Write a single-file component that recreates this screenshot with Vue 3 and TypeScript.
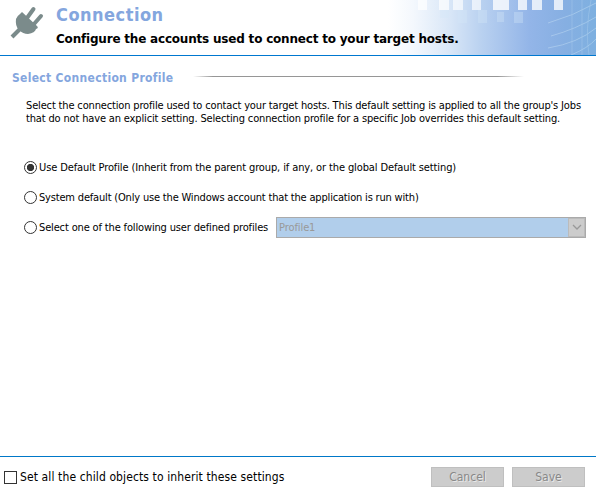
<script setup lang="ts">
import { ref } from 'vue'

type Profile = 'default' | 'system' | 'custom'
const selected = ref<Profile>('default')
const inherit = ref(false)
const blocks = [
  { x: 30, w: 9, o: 0.7 }, { x: 51, w: 10, o: 0.7 }, { x: 65, w: 10, o: 0.65 },
  { x: 84, w: 9, o: 0.65 }, { x: 105, w: 16, o: 0.78 }, { x: 130, w: 9, o: 0.76 },
  { x: 144, w: 10, o: 0.76 }, { x: 166, w: 9, o: 0.76 },
]
</script>

<template>
  <main class="panel">
    <header class="header">
      <svg class="art" viewBox="0 0 208 55" width="208" height="55">
        <defs>
          <linearGradient id="sky" x1="0" x2="1" y1="0" y2="0">
            <stop offset="0" stop-color="#fff" /><stop offset=".12" stop-color="#f4f8fd" />
            <stop offset=".3" stop-color="#d8e6f7" /><stop offset=".45" stop-color="#b9d1f0" />
            <stop offset=".68" stop-color="#93b5e8" /><stop offset=".85" stop-color="#86afe2" />
            <stop offset="1" stop-color="#7eb0e0" />
          </linearGradient>
        </defs>
        <rect width="208" height="55" fill="url(#sky)" />
        <rect v-for="b in blocks" :key="b.x" :x="b.x" y="0" :width="b.w" height="10" fill="#fff" :opacity="b.o" />
        <g fill="#d5e8f8" opacity=".35">
          <rect x="52" y="10" width="9" height="8" /><rect x="70" y="10" width="9" height="13" />
          <rect x="90" y="10" width="9" height="13" /><rect x="109" y="12" width="7" height="10" />
          <rect x="126" y="12" width="9" height="11" />
        </g>
        <g fill="none" stroke="#d4ebfa" opacity=".38">
          <path d="M160 23Q185 16 208 3M163 36Q188 29 208 17M160 48Q190 43 208 28M183 55Q200 48 208 39" />
          <path d="M184 0V55M194 0V55M203 0Q197 30 201 55" opacity=".6" />
        </g>
      </svg>
      <svg class="plug" viewBox="0 0 34 34" width="34" height="34">
        <g stroke="#7b8b8b" stroke-linecap="round" fill="none">
          <path d="M2 32L10 24" stroke-width="4" stroke-linecap="butt" />
          <path d="M17 13L23.5 4M24 19L31 11" stroke-width="4" />
        </g>
        <path d="M12 7L27 21Q29 23 26 24Q25 28 18 29Q13 29 9 25Q5 21 6 14Q7 11 10 9Z" fill="#7b8b8b" />
      </svg>
      <div class="titles">
        <h1>Connection</h1>
        <p>Configure the accounts used to connect to your target hosts.</p>
      </div>
    </header>
    <section class="content">
      <div class="section-title"><h2>Select Connection Profile</h2><i class="rule"></i></div>
      <p class="intro">Select the connection profile used to contact your target hosts. This default setting is applied to all the group's Jobs<br />that do not have an explicit setting. Selecting connection profile for a specific Job overrides this default setting.</p>
      <label class="option"><input v-model="selected" type="radio" value="default" /><span class="opt-default">Use Default Profile (Inherit from the parent group, if any, or the global Default setting)</span></label>
      <label class="option"><input v-model="selected" type="radio" value="system" /><span class="opt-system">System default (Only use the Windows account that the application is run with)</span></label>
      <div class="option">
        <label><input v-model="selected" type="radio" value="custom" /><span class="opt-custom">Select one of the following user defined profiles</span></label>
        <div class="select"><span>Profile1</span><b><svg width="10" height="7" viewBox="0 0 10 7"><path d="M1 1L5 5L9 1" fill="none" stroke="#999" stroke-width="1.3" /></svg></b></div>
      </div>
    </section>
    <footer class="footer">
      <label><input v-model="inherit" type="checkbox" /><span>Set all the child objects to inherit these settings</span></label>
      <button disabled>Cancel</button><button disabled>Save</button>
    </footer>
  </main>
</template>

<style>
body { background: #fff; }
</style>
<style scoped>
.panel { box-sizing: border-box; width: 596px; height: 498px; display: flex; flex-direction: column; font: 11px/13px "DejaVu Sans Condensed", "DejaVu Sans", sans-serif; color: #000; overflow: hidden; }
h1, h2, p { margin: 0; }
.header { position: relative; flex: none; height: 55px; display: flex; border-bottom: 1px solid #0078d0; }
.art { position: absolute; right: 0; top: 0; }
.plug { position: relative; margin: 5px 0 0 10px; }
.titles { position: relative; padding: 3px 0 0 12px; white-space: nowrap; }
h1 { font-size: 18px; line-height: 24px; letter-spacing: .5px; color: #84a6de; }
.titles p { font-family: "DejaVu Sans", sans-serif; font-size: 12px; font-weight: bold; line-height: 16px; letter-spacing: -.2px; padding-top: 4px; }
.content { flex: 1; }
.section-title { display: flex; align-items: flex-start; padding: 14px 0 0 12px; }
h2 { font-size: 12px; line-height: 17px; letter-spacing: .31px; color: #84a6de; width: 181px; white-space: nowrap; }
.rule { width: 331px; height: 1px; margin-top: 6px; background: linear-gradient(90deg, #fff, #969696 6%, #969696 92%, #fff); }
.intro { padding: 12px 0 0 26px; letter-spacing: -.155px; white-space: nowrap; }
.option { display: flex; align-items: center; height: 30px; padding-left: 24px; white-space: nowrap; }
.option label { display: flex; align-items: center; }
.intro + .option { margin-top: 27px; }
.opt-default { letter-spacing: -.115px; }
.opt-system { letter-spacing: -.18px; }
.opt-custom { letter-spacing: -.15px; }
input { appearance: none; box-sizing: border-box; width: 13px; height: 13px; margin: 0 2px 0 0; border: 1px solid #333; background: #fff; }
input[type=radio] { border-radius: 50%; }
input[type=radio]:checked { background: radial-gradient(circle, #333 3.3px, #fff 4px); }
input[type=checkbox] { margin-right: 3px; }
.select { box-sizing: border-box; width: 310px; height: 21px; margin-left: 8px; border: 1px solid #aaa; background: #b1ceeb; color: #999; display: flex; justify-content: space-between; align-items: center; padding-left: 2px; letter-spacing: -.1px; }
.select b { box-sizing: border-box; width: 17px; height: 19px; border: 1px solid #bbb; background: #ccc; display: flex; align-items: center; justify-content: center; }
.footer { box-sizing: border-box; flex: none; height: 42px; padding-bottom: 1px; border-top: 1px solid #0078c8; display: flex; align-items: center; font-size: 12px; }
.footer label { display: flex; align-items: center; flex: 1; padding-left: 4px; letter-spacing: .11px; white-space: nowrap; }
button { box-sizing: border-box; width: 73px; height: 20px; border: 1px solid #bfbfbf; background: #ccc; color: #888; text-shadow: 1px 1px #e8e8e8; padding: 0; margin-right: 8px; font: inherit; }
button:last-child { margin-right: 11px; }
</style>
